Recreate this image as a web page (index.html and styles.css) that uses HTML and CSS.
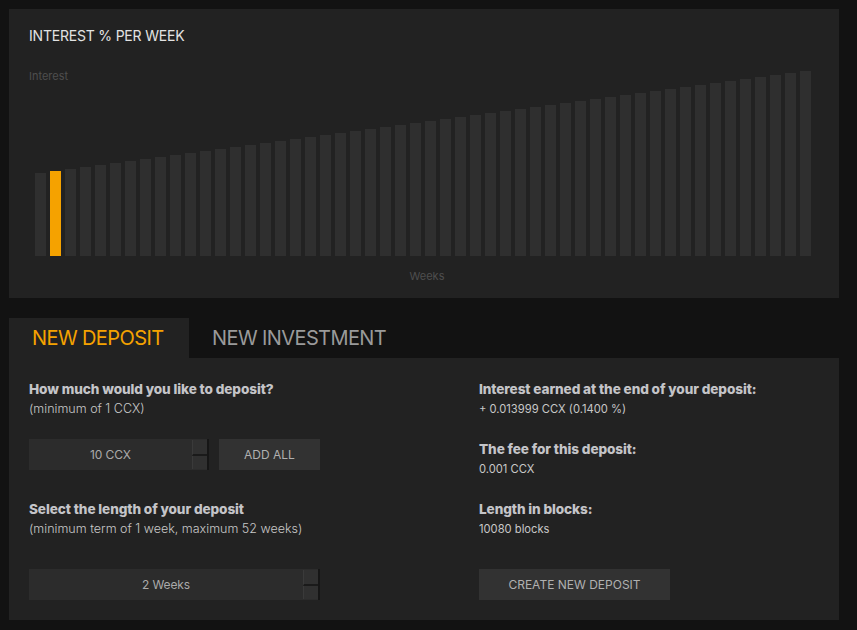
FILE: index.html
```html
<!DOCTYPE html>
<html>
<head>
<meta charset="utf-8">
<link rel="stylesheet" href="styles.css">
</head>
<body>
<div class="page">
  <section class="chart-panel">
    <h2 class="chart-title">INTEREST % PER WEEK</h2>
    <div class="chart-area">
      <div class="y-label">Interest</div>
      <div class="bars">
        <div class="bar" style="height:83px"></div>
        <div class="bar active" style="height:85px"></div>
        <div class="bar" style="height:87px"></div>
        <div class="bar" style="height:89px"></div>
        <div class="bar" style="height:91px"></div>
        <div class="bar" style="height:93px"></div>
        <div class="bar" style="height:95px"></div>
        <div class="bar" style="height:97px"></div>
        <div class="bar" style="height:99px"></div>
        <div class="bar" style="height:101px"></div>
        <div class="bar" style="height:103px"></div>
        <div class="bar" style="height:105px"></div>
        <div class="bar" style="height:107px"></div>
        <div class="bar" style="height:109px"></div>
        <div class="bar" style="height:111px"></div>
        <div class="bar" style="height:113px"></div>
        <div class="bar" style="height:115px"></div>
        <div class="bar" style="height:117px"></div>
        <div class="bar" style="height:119px"></div>
        <div class="bar" style="height:121px"></div>
        <div class="bar" style="height:123px"></div>
        <div class="bar" style="height:125px"></div>
        <div class="bar" style="height:127px"></div>
        <div class="bar" style="height:129px"></div>
        <div class="bar" style="height:131px"></div>
        <div class="bar" style="height:133px"></div>
        <div class="bar" style="height:135px"></div>
        <div class="bar" style="height:137px"></div>
        <div class="bar" style="height:139px"></div>
        <div class="bar" style="height:141px"></div>
        <div class="bar" style="height:143px"></div>
        <div class="bar" style="height:145px"></div>
        <div class="bar" style="height:147px"></div>
        <div class="bar" style="height:149px"></div>
        <div class="bar" style="height:151px"></div>
        <div class="bar" style="height:153px"></div>
        <div class="bar" style="height:155px"></div>
        <div class="bar" style="height:157px"></div>
        <div class="bar" style="height:159px"></div>
        <div class="bar" style="height:161px"></div>
        <div class="bar" style="height:163px"></div>
        <div class="bar" style="height:165px"></div>
        <div class="bar" style="height:167px"></div>
        <div class="bar" style="height:169px"></div>
        <div class="bar" style="height:171px"></div>
        <div class="bar" style="height:173px"></div>
        <div class="bar" style="height:175px"></div>
        <div class="bar" style="height:177px"></div>
        <div class="bar" style="height:179px"></div>
        <div class="bar" style="height:181px"></div>
        <div class="bar" style="height:183px"></div>
        <div class="bar" style="height:185px"></div>
      </div>
    </div>
    <div class="x-label">Weeks</div>
  </section>

  <nav class="tabs">
    <div class="tab tab-active">NEW DEPOSIT</div>
    <div class="tab">NEW INVESTMENT</div>
  </nav>

  <section class="deposit-panel">
    <div class="col">
      <div class="field-label">How much would you like to deposit?</div>
      <div class="field-note">(minimum of 1 CCX)</div>
      <div class="row row-input">
        <div class="num-input amount">
          <span class="num-value">10 CCX</span>
          <span class="spinner"><span class="spin-up"></span><span class="spin-down"></span></span>
        </div>
        <div class="btn btn-add">ADD ALL</div>
      </div>
      <div class="field-label gap-label">Select the length of your deposit</div>
      <div class="field-note">(minimum term of 1 week, maximum 52 weeks)</div>
      <div class="row row-action">
        <div class="num-input weeks">
          <span class="num-value">2 Weeks</span>
          <span class="spinner"><span class="spin-up"></span><span class="spin-down"></span></span>
        </div>
      </div>
    </div>
    <div class="col">
      <div class="field-label">Interest earned at the end of your deposit:</div>
      <div class="field-value">+ 0.013999 CCX (0.1400 %)</div>
      <div class="field-label gap-small">The fee for this deposit:</div>
      <div class="field-value">0.001 CCX</div>
      <div class="field-label gap-small">Length in blocks:</div>
      <div class="field-value">10080 blocks</div>
      <div class="row row-action">
        <div class="btn btn-create">CREATE NEW DEPOSIT</div>
      </div>
    </div>
  </section>
</div>
</body>
</html>
```

FILE: styles.css
```css
* { box-sizing: border-box; }

html, body {
  margin: 0;
  padding: 0;
  background: #121212;
}

body {
  font-family: Inter, "Noto Sans", "Liberation Sans", sans-serif;
  color: #cccccc;
}

.page {
  padding: 9px 0 0 9px;
  width: 839px;
}

.chart-panel {
  background: #222222;
  height: 289px;
  padding: 17px 20px 0 20px;
  display: flex;
  flex-direction: column;
}

.chart-title {
  margin: 0;
  font-size: 14px;
  font-weight: 400;
  line-height: 20px;
  color: #e2e2e2;
  letter-spacing: -0.2px;
}

.chart-area {
  margin-top: 20px;
  height: 190px;
  display: grid;
}

.y-label,
.bars {
  grid-area: 1 / 1;
}

.y-label {
  align-self: start;
  padding-top: 3px;
  font-size: 11px;
  line-height: 14px;
  color: #4e4e4e;
}

.bars {
  display: flex;
  align-items: flex-end;
  gap: 4px;
  padding-left: 6px;
}

.bar {
  width: 11px;
  flex: none;
  background: #2f2f2f;
}

.bar.active {
  background: #f5a200;
}

.x-label {
  margin-top: 13px;
  text-align: center;
  font-size: 11px;
  line-height: 14px;
  color: #4e4e4e;
  padding-left: 6px;
}

.tabs {
  margin-top: 20px;
  display: flex;
  height: 40px;
}

.tab {
  padding: 0 23px;
  font-size: 20px;
  line-height: 40px;
  color: #9a9a9a;
  letter-spacing: -0.6px;
  white-space: nowrap;
}

.tab-active {
  width: 180px;
  background: #222222;
  color: #f5a200;
}

.deposit-panel {
  background: #222222;
  height: 262px;
  padding: 21px 20px 0 20px;
  display: grid;
  grid-template-columns: 450px 1fr;
}

.col {
  display: flex;
  flex-direction: column;
  align-items: flex-start;
}

.field-label {
  font-size: 13.6px;
  font-weight: 800;
  line-height: 20px;
  color: #c4c4c8;
  letter-spacing: -0.1px;
  white-space: nowrap;
}

.field-note {
  font-size: 12.5px;
  font-weight: 300;
  line-height: 20px;
  color: #c8c8c8;
  letter-spacing: 0;
}

.field-value {
  font-size: 11.2px;
  font-weight: 400;
  line-height: 20px;
  color: #c8c8c8;
  letter-spacing: 0;
}

.gap-label { margin-top: 29px; }
.gap-small { margin-top: 20px; }

.row {
  display: flex;
  gap: 10px;
}

.row-input { margin-top: 20px; }
.row-action { margin-top: 30px; }

.num-input {
  height: 31px;
  background: #2c2c2c;
  display: flex;
  align-items: stretch;
}

.num-input.amount { width: 180px; }
.num-input.weeks { width: 291px; }

.num-value {
  flex: 1;
  text-align: center;
  font-size: 12px;
  line-height: 31px;
  color: #aaaaaa;
  letter-spacing: -0.1px;
}

.spinner {
  width: 17px;
  display: flex;
  flex-direction: column;
  padding: 1px 0 1px 0;
  border-right: 2px solid #161616;
}

.spin-up,
.spin-down {
  flex: 1;
  background: #303030;
  border-left: 1px solid #3a3a3a;
}

.spin-up {
  border-bottom: 2px solid #1a1a1a;
}

.btn {
  height: 31px;
  background: #323232;
  text-align: center;
  font-size: 12px;
  line-height: 31px;
  color: #b0b0b0;
  letter-spacing: 0;
}

.btn-add { width: 101px; }
.btn-create { width: 191px; }
```
